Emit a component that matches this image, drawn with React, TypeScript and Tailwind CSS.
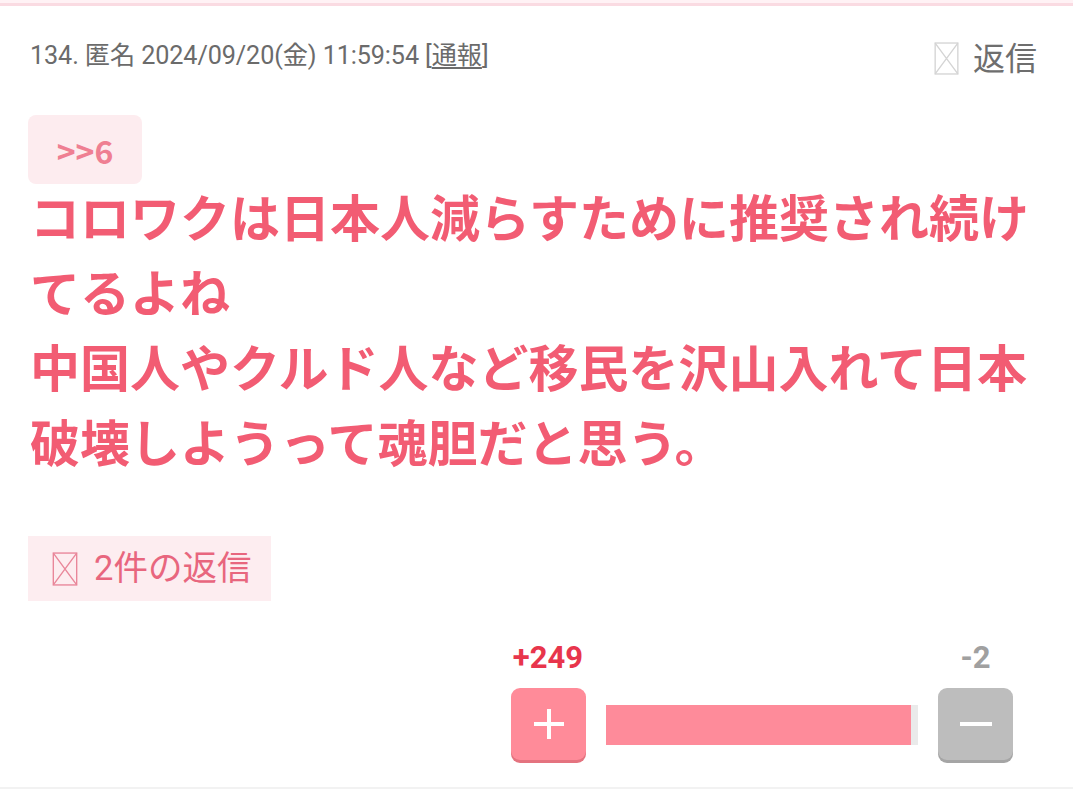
import React from 'react';

const font = { fontFamily: 'Roboto, "Noto Sans CJK JP", sans-serif' };

const BrokenImage = ({ color, className }: { color: string; className?: string }) => (
  <svg viewBox="0 0 24 32" className={className} fill="none" stroke={color} strokeWidth="1.3">
    <rect x="1" y="1" width="22" height="30" />
    <path d="M1 1 L23 31 M23 1 L1 31" />
  </svg>
);

export default function App() {
  const up = 249;
  const down = 2;

  return (
    <div className="w-[1073px] h-[798px] bg-white overflow-hidden" style={font}>
      <div className="h-[3px] bg-[#fff2f5]" />
      <div className="h-[3px] bg-[#fadbe2]" />

      <div className="px-[30px]">
        {/* header */}
        <div className="flex items-center justify-between h-[100px] pb-[1px]">
          <div className="text-[25.2px] text-[#6b6b6b] tracking-[-0.1px]">
            134. 匿名 2024/09/20(金) 11:59:54 [<span className="underline underline-offset-[3px]">通報</span>]
          </div>
          <div className="flex items-center gap-[14px] pr-[6px] pt-[6px]">
            <BrokenImage color="#d4d4d4" className="w-[25px] h-[33px]" />
            <span className="text-[32px] text-[#6e6e6e] leading-none">返信</span>
          </div>
        </div>

        {/* anchor */}
        <div className="mt-[9px] -ml-[2px] w-[114px] h-[69px] rounded-[8px] bg-[#fdecef] flex items-center justify-center">
          <span className="text-[32px] font-bold text-[#ef7f92]" style={{ fontFamily: '"Noto Sans CJK JP", sans-serif' }}>
            &gt;&gt;6
          </span>
        </div>

        {/* body */}
        <div className="text-[50px] leading-[75px] font-bold text-[#f25c73] pr-[8px] -mt-[1px]">
          コロワクは日本人減らすために推奨され続けてるよね
          <br />
          中国人やクルド人など移民を沢山入れて日本破壊しようって魂胆だと思う。
        </div>

        {/* replies */}
        <div className="mt-[53px] -ml-[2px] inline-flex items-center gap-[16px] h-[65px] pl-[24px] pr-[20px] bg-[#fdedf0]">
          <BrokenImage color="#e9879a" className="w-[26px] h-[34px]" />
          <span className="text-[34.5px] text-[#e8667e]">2件の返信</span>
        </div>

        {/* votes */}
        <div className="flex justify-end pr-[30px] mt-[38px]">
          <div className="w-[502px]">
            <div className="flex justify-between items-end h-[34px]">
              <span className="w-[80px] text-center text-[31px] font-bold text-[#e8354c] leading-none -ml-[3px]">+{up}</span>
              <span className="w-[75px] text-center text-[31px] font-bold text-[#a0a0a0] leading-none">-{down}</span>
            </div>
            <div className="flex items-center gap-[20px] mt-[15px]">
              <button className="w-[75px] h-[72px] rounded-[9px] bg-[#ff8b99] shadow-[0_3px_0_#e4737f] flex items-center justify-center shrink-0">
                <svg viewBox="0 0 36 36" className="w-[36px] h-[36px]" stroke="white" strokeWidth="4" strokeLinecap="butt">
                  <path d="M18 3 V33 M3 18 H33" />
                </svg>
              </button>
              <div className="flex-1 h-[40px] bg-[#eaeaea] mt-[2px]">
                <div className="h-full bg-[#fe8b9a] w-[97.6%]" />
              </div>
              <button className="w-[75px] h-[72px] rounded-[9px] bg-[#bdbdbd] shadow-[0_3px_0_#a5a5a5] flex items-center justify-center shrink-0">
                <svg viewBox="0 0 36 36" className="w-[36px] h-[36px]" stroke="white" strokeWidth="4">
                  <path d="M2 18 H34" />
                </svg>
              </button>
            </div>
          </div>
        </div>
      </div>

      <div className="mt-[27px] h-[2px] bg-[#f2f2f2]" />
    </div>
  );
}
